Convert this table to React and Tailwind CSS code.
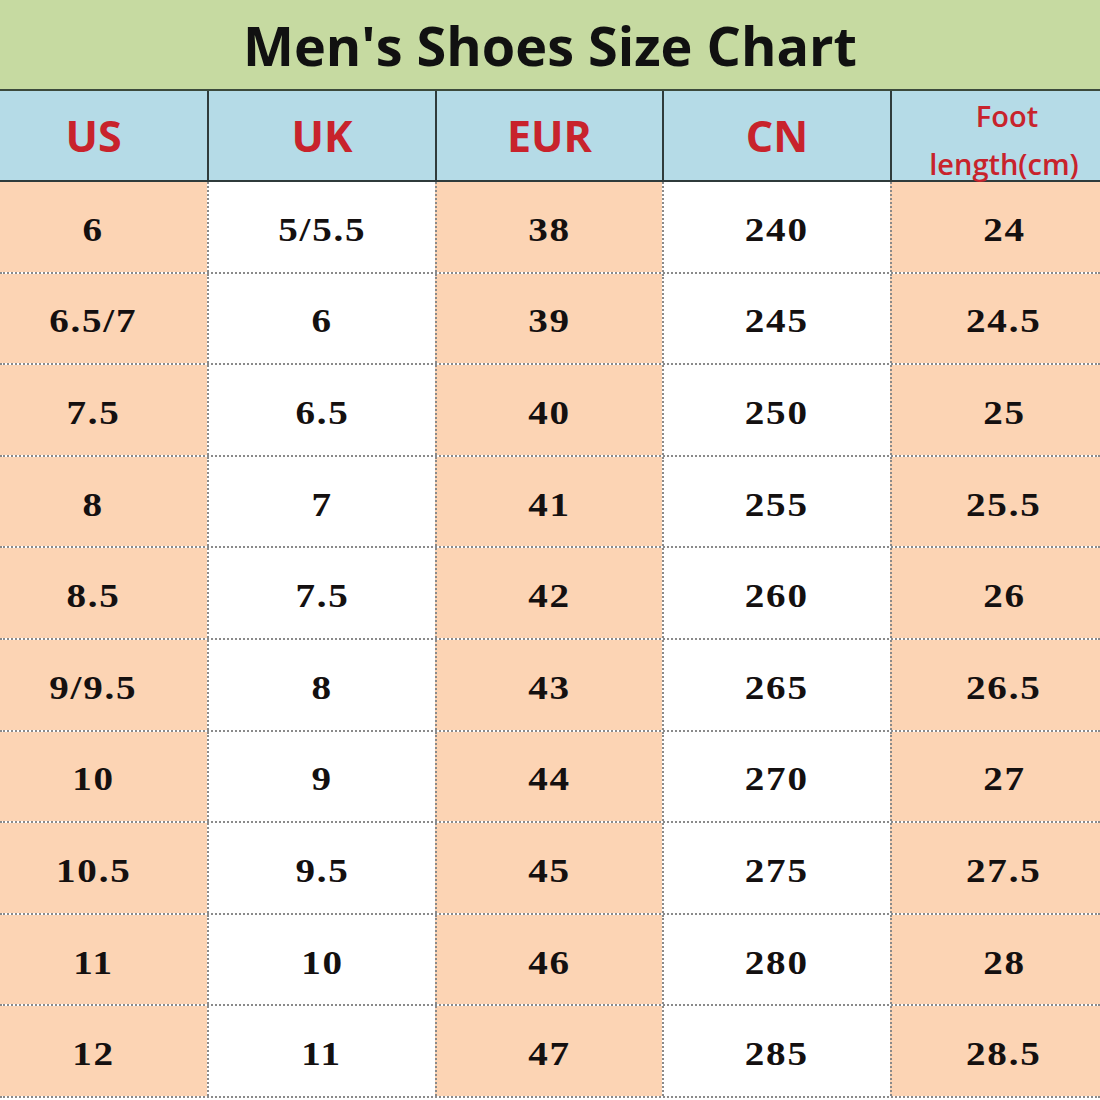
import React from 'react';

const rows = [
  ['6', '5/5.5', '38', '240', '24'],
  ['6.5/7', '6', '39', '245', '24.5'],
  ['7.5', '6.5', '40', '250', '25'],
  ['8', '7', '41', '255', '25.5'],
  ['8.5', '7.5', '42', '260', '26'],
  ['9/9.5', '8', '43', '265', '26.5'],
  ['10', '9', '44', '270', '27'],
  ['10.5', '9.5', '45', '275', '27.5'],
  ['11', '10', '46', '280', '28'],
  ['12', '11', '47', '285', '28.5'],
];

const cols = 'grid grid-cols-[207px_228px_227px_228px_210px]';
const peach = [true, false, true, false, true];
// first and last columns sit a little off-centre in the original
const shift = ['pr-[20px]', '', '', '', 'pl-[16px]'];

export default function App() {
  return (
    <div className="w-[1100px] h-[1100px] overflow-hidden bg-white">
      {/* title */}
      <div className="h-[91px] bg-[#c6daa1] border-b-2 border-[#3c4a3c] flex items-center justify-center">
        <h1 className="text-[54px] font-bold text-[#111] leading-none" style={{ fontFamily: '"Open Sans", sans-serif' }}>
          Men's Shoes Size Chart
        </h1>
      </div>

      {/* header */}
      <div className={`${cols} h-[91px] bg-[#b5dbe7] border-b-2 border-[#2f3b3b]`} style={{ fontFamily: '"Open Sans", sans-serif' }}>
        {['US', 'UK', 'EUR', 'CN'].map((h, i) => (
          <div key={h} className={`flex items-center justify-center text-[43px] font-bold text-[#c8232c] pb-[10px] ${shift[i]} ${i > 0 ? 'border-l-2 border-[#2f3b3b]' : ''}`}>
            {h}
          </div>
        ))}
        <div className="border-l-2 border-[#2f3b3b] flex flex-col items-center justify-center text-[29px] font-semibold text-[#c8232c] leading-[50px] pl-[16px] pb-[2px]">
          <span className="pl-[6px]">Foot</span>
          <span className="-mt-[2px]">length(cm)</span>
        </div>
      </div>

      {/* body */}
      <div style={{ fontFamily: '"Liberation Serif", serif' }}>
        {rows.map((r, ri) => (
          <div key={ri} className={`${cols} h-[91.6px] border-b-2 border-dotted border-[#8a8a8a]`}>
            {r.map((v, ci) => (
              <div
                key={ci}
                className={`flex items-center justify-center pt-[5px] ${shift[ci]} ${peach[ci] ? 'bg-[#fcd4b4]' : 'bg-white'} ${ci > 0 ? 'border-l-2 border-dotted border-[#8a8a8a]' : ''}`}
              >
                <span className="inline-block scale-x-[1.15] text-[34px] font-bold text-[#141010] tracking-[1.5px]">{v}</span>
              </div>
            ))}
          </div>
        ))}
      </div>
    </div>
  );
}
